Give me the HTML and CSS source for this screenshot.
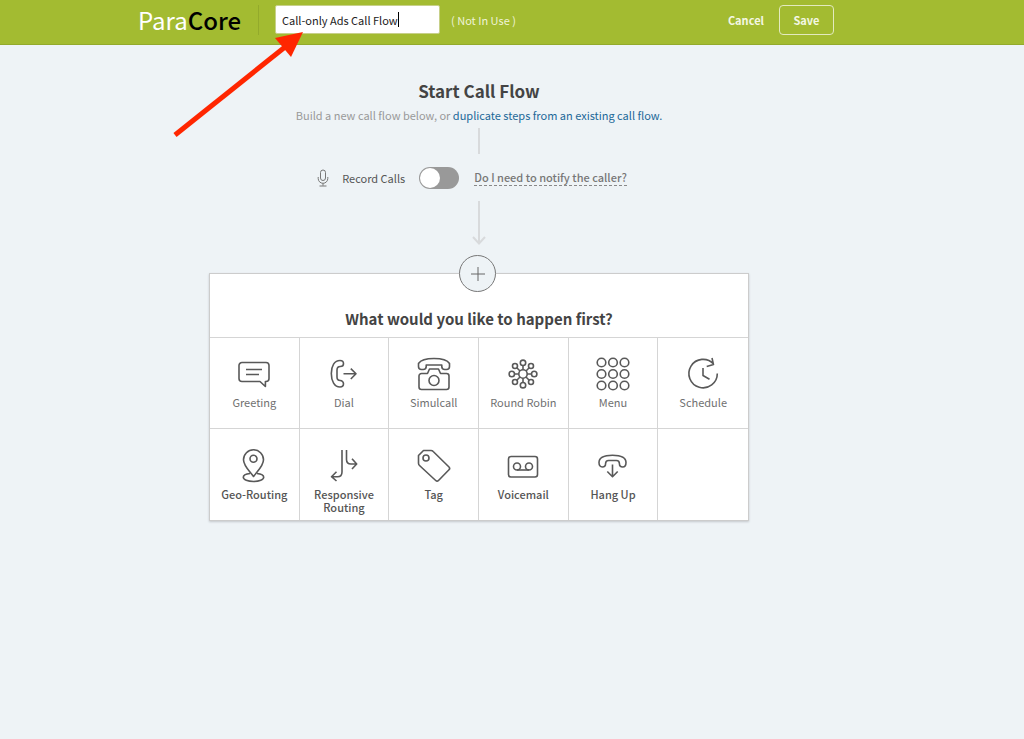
FILE: index.html
```html
<!DOCTYPE html>
<html lang="en">
<head>
<meta charset="utf-8">
<meta name="viewport" content="width=device-width, initial-scale=1">
<title>Call-only Ads Call Flow</title>
<link rel="stylesheet" href="styles.css">
</head>
<body>
<header class="topbar">
  <a class="logo" href="#">Para<span class="logo-dark">Core</span></a>
  <div class="flow-name">
    <input class="name-input" type="text" aria-label="Call flow name" value="Call-only Ads Call Flow">
    <span class="caret"></span>
  </div>
  <span class="status">( Not In Use )</span>
  <div class="actions">
    <a class="cancel" href="#">Cancel</a>
    <button class="save" type="button">Save</button>
  </div>
</header>

<main class="flow">
  <h1 class="title">Start Call Flow</h1>
  <p class="intro">Build a new call flow below, or <a class="link" href="#">duplicate steps from an existing call flow.</a></p>
  <div class="connector"></div>
  <div class="record">
    <svg class="mic" viewBox="0 0 12 18"><rect x="3.5" y="1" width="5" height="10.5" rx="2.5"/><path d="M1.2 8v1.5a4.8 4.8 0 0 0 9.6 0V8M6 14.3v2.4M2.5 17h7"/></svg>
    <label class="record-label" for="record">Record Calls</label>
    <input class="switch" id="record" type="checkbox">
    <a class="help" href="#">Do I need to notify the caller?</a>
  </div>
  <svg class="down-arrow" viewBox="0 0 16 44"><path d="M8 0v42M2 36l6 6.5 6-6.5"/></svg>

  <section class="card">
    <button class="add" type="button" aria-label="Add step"><svg class="plus" viewBox="0 0 14 14"><path d="M7 0v14M0 7h14"/></svg></button>
    <h2 class="question">What would you like to happen first?</h2>
    <div class="steps">
      <button class="step" type="button">
        <svg class="icon" viewBox="0 0 36 36"><path d="M6 6.500h24a3 3 0 0 1 3 3v13a3 3 0 0 1-3 3h-.6v5L24 25.500H6a3 3 0 0 1-3-3v-13a3 3 0 0 1 3-3zM10 13.500h16M10 18.500h13"/></svg>
        <span>Greeting</span>
      </button>
      <button class="step" type="button">
        <svg class="icon" viewBox="0 0 36 36"><path d="M14 4.500C8.500 4.500 5.300 10 5.300 17.500S8.500 31 14 31c2 0 3.500-1.400 3.500-3.200s-1.500-3.300-3.200-3.300c-2.300 0-3.300-1-3.300-3.500v-7c0-2.500 1-3.500 3.300-3.500 1.700 0 3.200-1 3.200-2.800S16 4.500 14 4.500zM17.500 17.800h12.300M24.800 12.600l5.200 5.200-5.200 5.200"/></svg>
        <span>Dial</span>
      </button>
      <button class="step" type="button">
        <svg class="icon" viewBox="0 0 36 36"><path d="M2.500 7.500C5 3.600 10 2.500 18 2.500s13 1.100 15.500 5V10.500c0 2-1 3-3 3h-1.700c-2 0-3-1-3-3V9H10.200v1.500c0 2-1 3-3 3H5.500c-2 0-3-1-3-3z"/><path d="M13.500 13h9l2 4.500h6a2.500 2.500 0 0 1 2.500 2.500v11a2.500 2.500 0 0 1-2.500 2.500h-25A2.500 2.500 0 0 1 3 31V20a2.500 2.500 0 0 1 2.500-2.500h6z"/><circle cx="18" cy="24.500" r="5"/></svg>
        <span>Simulcall</span>
      </button>
      <button class="step" type="button">
        <svg class="icon" viewBox="0 0 36 36"><circle cx="18" cy="18" r="4.200"/><path d="M18 13.800V9.600M18 22.200v4.200M13.800 18H9.600M22.200 18h4.200M15 15l-3.200-3.200M21 21l3.200 3.200M21 15l3.200-3.200M15 21l-3.200 3.200"/><circle cx="18" cy="6.800" r="2.700"/><circle cx="18" cy="29.200" r="2.700"/><circle cx="6.800" cy="18" r="2.700"/><circle cx="29.200" cy="18" r="2.700"/><circle cx="10" cy="10" r="2.500"/><circle cx="26" cy="10" r="2.500"/><circle cx="10" cy="26" r="2.500"/><circle cx="26" cy="26" r="2.500"/></svg>
        <span>Round Robin</span>
      </button>
      <button class="step" type="button">
        <svg class="icon" viewBox="0 0 36 36"><circle cx="6.500" cy="6.500" r="4.300"/><circle cx="18" cy="6.500" r="4.300"/><circle cx="29.500" cy="6.500" r="4.300"/><circle cx="6.500" cy="18" r="4.300"/><circle cx="18" cy="18" r="4.300"/><circle cx="29.500" cy="18" r="4.300"/><circle cx="6.500" cy="29.500" r="4.300"/><circle cx="18" cy="29.500" r="4.300"/><circle cx="29.500" cy="29.500" r="4.300"/></svg>
        <span>Menu</span>
      </button>
      <button class="step" type="button">
        <svg class="icon" viewBox="0 0 36 36"><path d="M32.300 17.500A14.200 14.200 0 1 1 28.600 8M27 2l1.500 6.600-6.800 1.900M18 12v7.500l6.500 3.700"/></svg>
        <span>Schedule</span>
      </button>
      <button class="step step-strong" type="button">
        <svg class="icon" viewBox="0 0 36 36"><path d="M17.500 29.500C12 22.500 7.500 18.500 7.500 12.800a10 10 0 0 1 20 0c0 5.700-4.500 9.700-10 16.700z"/><circle cx="17.500" cy="11.800" r="3.500"/><path d="M14 26.500c-4 .4-6.700 1.800-6.700 3.800 0 2.400 4.500 4.200 10.200 4.200s10.200-1.800 10.200-4.200c0-2-2.700-3.400-6.700-3.800"/></svg>
        <span>Geo-Routing</span>
      </button>
      <button class="step step-strong" type="button">
        <svg class="icon" viewBox="0 0 36 36"><path d="M16 3v22c0 3-1.500 4.700-4.500 4.700H6M10.500 24.700l-5 5 5 4.300M20.500 3v9.500c0 3 1.500 4.500 4.500 4.500h5M26 11.700l4.700 5.300-4.700 5"/></svg>
        <span>Responsive Routing</span>
      </button>
      <button class="step step-strong" type="button">
        <svg class="icon" viewBox="0 0 36 36"><path d="M2.500 8.500 7.500 3.500H15a3 3 0 0 1 2.200 1L33 20a2 2 0 0 1 0 2.800L22.500 33.500a2 2 0 0 1-2.800 0L3.500 18.500a3 3 0 0 1-1-2.200z"/><circle cx="10" cy="11" r="3"/></svg>
        <span>Tag</span>
      </button>
      <button class="step step-strong" type="button">
        <svg class="icon" viewBox="0 0 36 36"><rect x="3.500" y="9.500" width="29" height="20.500" rx="2.500"/><circle cx="12" cy="19.500" r="3.500"/><circle cx="24" cy="19.500" r="3.500"/><path d="M12 23h12"/></svg>
        <span>Voicemail</span>
      </button>
      <button class="step step-strong" type="button">
        <svg class="icon" viewBox="0 0 36 36"><path d="M4 15.500C4 10.500 9.500 8.200 17.500 8.200S31 10.500 31 15.500c0 3-1.300 4.500-3.300 4.500s-3.300-1.400-3.300-3.500-1-3-3-3h-7.800c-2 0-3 1-3 3S9.300 20 7.300 20 4 18.500 4 15.500zM17.500 17.500v12M12.300 24.500l5.200 5.200 5.200-5.200"/></svg>
        <span>Hang Up</span>
      </button>
      <div class="step"></div>
    </div>
  </section>
</main>

<svg class="pointer" viewBox="0 0 132 108"><path d="M2 104 117 12" stroke="#ff2600" stroke-width="5"/><path d="M130 1 102 7l16 19z" fill="#ff2600"/></svg>
</body>
</html>
```

FILE: styles.css
```css
* {
  box-sizing: border-box;
}

body {
  margin: 0;
  min-height: 100vh;
  background: #eef3f6;
  color: #444;
  font: 11px/16px "Noto Sans CJK SC", "Open Sans", sans-serif;
}

a {
  text-decoration: none;
}

button,
input {
  font: inherit;
  margin: 0;
}

.topbar {
  display: flex;
  align-items: center;
  height: 45px;
  padding: 0 190px 5px 138px;
  background: #a3bb31;
  border-bottom: 1px solid #93aa2b;
  color: #fff;
}

.logo {
  width: 121px;
  border-right: 1px solid #93aa2b;
  color: #fff;
  font-size: 24px;
  line-height: 30px;
}

.logo-dark {
  color: #000;
  font-weight: 500;
}

.flow-name {
  position: relative;
  margin-left: 16px;
}

.name-input {
  display: block;
  width: 165px;
  height: 29px;
  padding: 0 6px;
  border: 1px solid #c7d089;
  border-radius: 2px;
  background: #fff;
  color: #222;
}

.caret {
  position: absolute;
  left: 123px;
  top: 7px;
  width: 1px;
  height: 15px;
  background: #000;
}

.status {
  margin-left: 11px;
  color: #eff3d8;
}

.actions {
  display: flex;
  align-items: center;
  gap: 15px;
  margin-left: auto;
  font-weight: 700;
}

.cancel {
  color: #f4f7e4;
}

.save {
  width: 55px;
  height: 30px;
  padding: 0;
  border: 1px solid #e3eabf;
  border-radius: 4px;
  background: transparent;
  color: #f4f7e4;
}

.flow {
  display: flex;
  flex-direction: column;
  align-items: center;
  padding: 34px 66px 40px 0;
}

.title {
  margin: 0;
  font-size: 17px;
  line-height: 24px;
  font-weight: 700;
}

.intro {
  margin: 4px 0 5px;
  color: #999;
}

.link {
  color: #1c6898;
}

.connector {
  width: 2px;
  height: 26px;
  background: #d8dadc;
}

.record {
  display: flex;
  align-items: center;
  height: 47px;
  padding-right: 14px;
}

.mic {
  width: 12px;
  height: 18px;
  margin-right: 13px;
  fill: none;
  stroke: #777;
}

.record-label {
  color: #555;
}

.switch {
  appearance: none;
  display: flex;
  width: 40px;
  height: 22px;
  margin: 0 15px 0 14px;
  padding: 1px;
  border-radius: 11px;
  background: #999;
}

.switch::before {
  content: "";
  width: 20px;
  height: 20px;
  border-radius: 50%;
  background: #fff;
}

.switch:checked {
  justify-content: flex-end;
  background: #a3bb31;
}

.help {
  border-bottom: 1px dashed #888;
  color: #777;
  font-weight: 500;
  line-height: 15px;
}

.down-arrow {
  width: 16px;
  height: 44px;
  fill: none;
  stroke: #d8dadc;
  stroke-width: 2;
}

.card {
  position: relative;
  width: 100%;
  max-width: 540px;
  margin-top: 28px;
  border: 1px solid #ccc;
  background: #fff;
  box-shadow: 0 1px 2px #c4c8cc;
}

.add {
  position: absolute;
  top: -19px;
  left: calc(50% - 20px);
  display: grid;
  place-items: center;
  width: 37px;
  height: 37px;
  padding: 0;
  border: 1px solid #777;
  border-radius: 50%;
  background: #eef3f6;
}

.plus {
  width: 14px;
  height: 14px;
  stroke: #666;
}

.question {
  margin: 0;
  padding: 34px 0 7px;
  font-size: 15px;
  line-height: 22px;
  font-weight: 700;
  text-align: center;
}

.steps {
  display: grid;
  grid-template-columns: repeat(6, 1fr);
}

.step {
  display: flex;
  flex-direction: column;
  align-items: center;
  justify-content: flex-start;
  gap: 4px;
  height: 91px;
  padding: 18px 4px 0;
  border: solid #d5d5d5;
  border-width: 1px 1px 0 0;
  background: #fff;
  color: #707070;
  line-height: 13px;
}

.step:nth-child(6n) {
  border-right: 0;
}

.step-strong {
  gap: 5px;
  height: 92px;
  color: #555;
  font-weight: 500;
}

.icon {
  flex: none;
  width: 36px;
  height: 36px;
  fill: none;
  stroke: #595959;
  stroke-width: 1.6;
  stroke-linejoin: round;
}

.pointer {
  position: absolute;
  left: 173px;
  top: 31px;
  width: 132px;
  height: 108px;
  fill: none;
}
```
